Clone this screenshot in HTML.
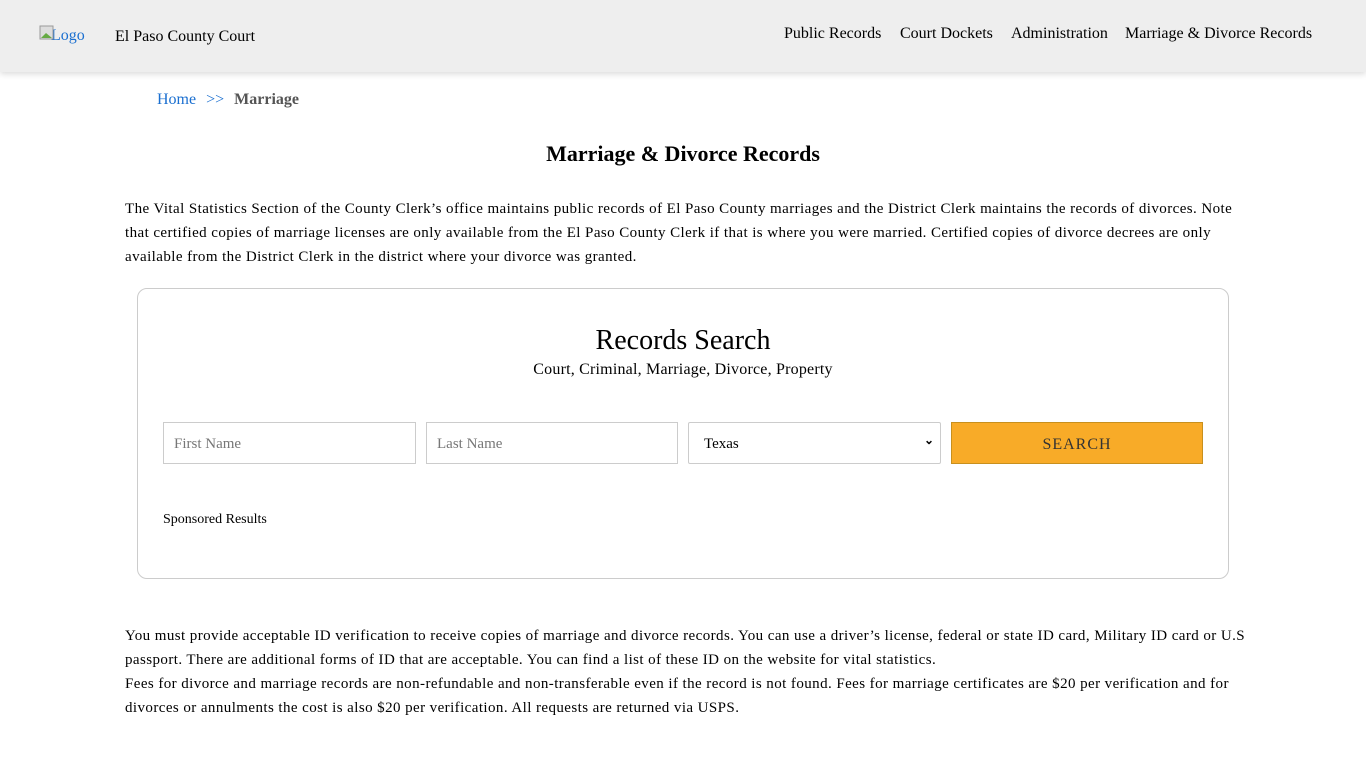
<!DOCTYPE html>
<html><head><meta charset="utf-8"><style>
*{box-sizing:border-box}
body{margin:0;font-family:"Liberation Serif",serif;color:#000;background:#fff;width:1366px;height:768px;overflow:hidden;position:relative}
.hdr{position:absolute;left:0;top:0;width:1366px;height:72px;background:#eee;box-shadow:0 2px 6px rgba(0,0,0,.15)}
.a{position:absolute;white-space:nowrap}
p{margin:0}
.box{position:absolute;left:137px;top:288px;width:1092px;height:291px;border:1px solid #ccc;border-radius:10px}
.in{position:absolute;top:422px;height:42px;border:1px solid #ccc;background:#fff;font-size:15px;color:#777;padding:13px 10px}
.tx{font-size:15px;line-height:24px;letter-spacing:0.42px;white-space:normal}
</style></head><body>
<div class="hdr"></div>
<div class="a" style="left:39px;top:27px;font-size:16px;color:#1a6fd0">
<svg width="16" height="16" style="position:absolute;left:0;top:-2px"><rect x="1" y="1" width="13" height="13" fill="#ddd" stroke="#999"/><path d="M2 13 L7 8 L13 13Z" fill="#6a4"/></svg><span>&nbsp;&nbsp;&nbsp;Logo</span></div>
<div class="a" style="left:115px;top:28px;font-size:16px">El Paso County Court</div>
<div class="a" style="left:784px;top:25px;font-size:16px">Public Records</div>
<div class="a" style="left:900px;top:25px;font-size:16px">Court Dockets</div>
<div class="a" style="left:1011px;top:25px;font-size:16px">Administration</div>
<div class="a" style="left:1125px;top:25px;font-size:16px">Marriage &amp; Divorce Records</div>
<div class="a" style="left:157px;top:91px;font-size:16px"><span style="color:#1a6fd0">Home</span><span style="color:#1a6fd0;margin-left:10px">&gt;&gt;</span><b style="color:#555;margin-left:10px">Marriage</b></div>
<div class="a" style="left:0;width:1366px;text-align:center;top:141px;font-size:22px;font-weight:bold">Marriage &amp; Divorce Records</div>
<p class="a tx" style="left:125px;top:197px;width:1120px">The Vital Statistics Section of the County Clerk’s office maintains public records of El Paso County marriages and the District Clerk maintains the records of divorces. Note that certified copies of marriage licenses are only available from the El Paso County Clerk if that is where you were married. Certified copies of divorce decrees are only available from the District Clerk in the district where your divorce was granted.</p>
<div class="box"></div>
<div class="a" style="left:0;width:1366px;text-align:center;top:325px;font-size:28px">Records Search</div>
<div class="a" style="left:0;width:1366px;text-align:center;top:361px;font-size:16px;letter-spacing:0.2px">Court, Criminal, Marriage, Divorce, Property</div>
<div class="in" style="left:163px;width:253px">First Name</div>
<div class="in" style="left:426px;width:252px">Last Name</div>
<div class="in" style="left:688px;width:253px;color:#000;padding-left:15px;border-radius:2px">Texas<span style="position:absolute;right:6px;top:10px;font-size:12px;font-weight:bold">&#8964;</span></div>
<div class="a" style="left:951px;top:422px;width:252px;height:42px;background:#f8ab28;border:1px solid #c8901e;text-align:center;line-height:44px;font-size:16px;color:#333;letter-spacing:1px">SEARCH</div>
<div class="a" style="left:163px;top:512px;font-size:14px">Sponsored Results</div>
<p class="a tx" style="left:125px;top:624px;width:1125px">You must provide acceptable ID verification to receive copies of marriage and divorce records. You can use a driver’s license, federal or state ID card, Military ID card or U.S passport. There are additional forms of ID that are acceptable. You can find a list of these ID on the website for vital statistics.<br>Fees for divorce and marriage records are non-refundable and non-transferable even if the record is not found. Fees for marriage certificates are $20 per verification and for divorces or annulments the cost is also $20 per verification. All requests are returned via USPS.</p>
</body></html>
